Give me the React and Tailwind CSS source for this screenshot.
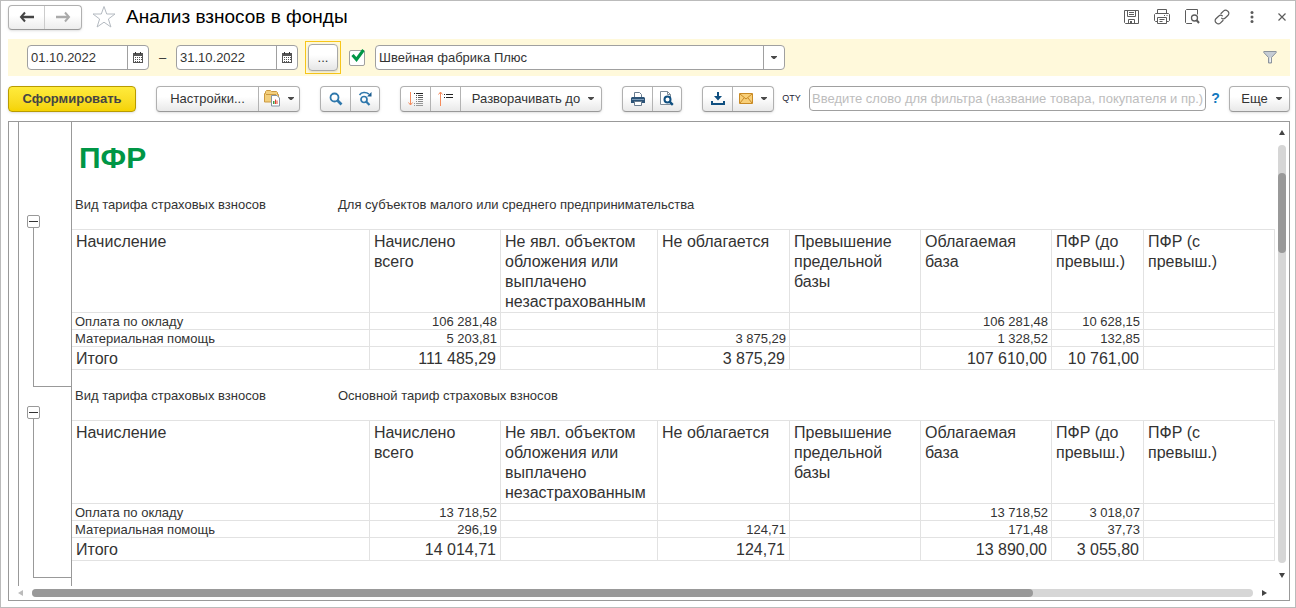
import clsx from "clsx";

const columns = [
  { title: "Начисление", width: "w-[298px]" },
  { title: "Начислено всего", width: "w-[131px]" },
  { title: "Не явл. объектом обложения или выплачено незастрахованным", width: "w-[157px]" },
  { title: "Не облагается", width: "w-[132px]" },
  { title: "Превышение предельной базы", width: "w-[131px]" },
  { title: "Облагаемая база", width: "w-[131px]" },
  { title: "ПФР (до превыш.)", width: "w-[92px]" },
  { title: "ПФР (с превыш.)", width: "w-[131px]" },
];

const groups = [
  {
    tariff: "Для субъектов малого или среднего предпринимательства",
    rows: [
      ["Оплата по окладу", "106 281,48", "", "", "", "106 281,48", "10 628,15", ""],
      ["Материальная помощь", "5 203,81", "", "3 875,29", "", "1 328,52", "132,85", ""],
    ],
    total: ["Итого", "111 485,29", "", "3 875,29", "", "107 610,00", "10 761,00", ""],
  },
  {
    tariff: "Основной тариф страховых взносов",
    rows: [
      ["Оплата по окладу", "13 718,52", "", "", "", "13 718,52", "3 018,07", ""],
      ["Материальная помощь", "296,19", "", "124,71", "", "171,48", "37,73", ""],
    ],
    total: ["Итого", "14 014,71", "", "124,71", "", "13 890,00", "3 055,80", ""],
  },
];

/* ICONS */

function Caret() {
  return (
    <svg width="6" height="3" viewBox="0 0 6 3" fill="#4a4a4a">
      <path d="M0 0h6v.7L3.700 3H2.300L0 .7z" />
    </svg>
  );
}

function ArrowIcon({ flip, color }) {
  return (
    <svg width="15" height="12" viewBox="0 0 15 12" fill="none" stroke={color} strokeWidth="2">
      <path d={flip ? "M0 6h12" : "M15 6H3"} strokeWidth="2.500" />
      <path d={flip ? "M9 1.500L13 6l-4 4.500" : "M6 1.500L2 6l4 4.500"} />
    </svg>
  );
}

function StarIcon() {
  return (
    <svg width="24" height="24" viewBox="0 0 24 24" fill="#fff" stroke="#b4bac1" strokeWidth="1">
      <path d="M12 1.500l2.700 7.500H23l-6.600 5 2.500 8L12 17.200 5.100 22l2.500-8L1 9h8.300z" />
    </svg>
  );
}

function CalendarIcon() {
  return (
    <svg width="10" height="11" viewBox="0 0 10 11" shapeRendering="crispEdges">
      <path d="M0 1h10v10H0z" fill="#555" />
      <path d="M1 4h8v6H1z" fill="#fff" />
      <path d="M2 0h1v2H2zM7 0h1v2H7z" fill="#333" />
      <path d="M2 5h1v1H2zM4 5h1v1H4zM6 5h1v1H6zM8 5h1v1H8zM2 7h1v1H2zM4 7h1v1H4zM6 7h1v1H6zM8 7h1v1H8zM2 9h1v1H2zM4 9h1v1H4zM6 9h1v1H6z" fill="#555" />
    </svg>
  );
}

function SaveIcon() {
  return (
    <svg width="16" height="16" viewBox="0 0 16 16" fill="none" stroke="#5c5c5c">
      <path d="M.5 1.500h14v13h-13l-1-1z" />
      <path d="M3.500 1.500v6h8v-6M5 3.500h5M5 5.500h5M4.500 14.500v-4h6v4" />
      <path d="M6 12h2v2.500H6z" fill="#5c5c5c" stroke="none" />
    </svg>
  );
}

function PrinterOutlineIcon() {
  return (
    <svg width="16" height="16" viewBox="0 0 16 16" fill="none" stroke="#5c5c5c">
      <path d="M3.500 4.500v-4h9v4M3.500 12.500h-2l-1-1v-6l1-1h13l1 1v6l-1 1h-2" />
      <path d="M3.500 8.500h9v6h-9zM5.500 10.500h5M5.500 12.500h3M10 6.500h1M12.500 6.500h1" />
    </svg>
  );
}

function PreviewOutlineIcon() {
  return (
    <svg width="16" height="16" viewBox="0 0 16 16" fill="none" stroke="#5c5c5c">
      <path d="M8 14.500H2.500l-1-1v-12l1-1h11v5" />
      <circle cx="10.500" cy="9" r="3" strokeWidth="1.300" />
      <path d="M12.500 11l2.500 3" strokeWidth="2" />
    </svg>
  );
}

function LinkIcon() {
  return (
    <svg width="16" height="16" viewBox="0 0 16 16" fill="none" stroke="#5c5c5c" strokeWidth="1.200" strokeLinecap="round">
      <path d="M7 4.500l2.700-2.700a2.600 2.600 0 013.700 0l.7.700a2.600 2.600 0 010 3.700L11.200 9a2.600 2.600 0 01-3.500.2" />
      <path d="M9 11.500l-2.700 2.700a2.600 2.600 0 01-3.700 0l-.7-.7a2.600 2.600 0 010-3.700L4.800 7a2.600 2.600 0 013.500-.2" />
    </svg>
  );
}

function DotsIcon() {
  return (
    <svg width="4" height="12" viewBox="0 0 4 12" fill="#5c5c5c">
      <circle cx="2" cy="1.500" r="1.500" />
      <circle cx="2" cy="6" r="1.500" />
      <circle cx="2" cy="10.500" r="1.500" />
    </svg>
  );
}

function CloseIcon() {
  return (
    <svg width="8" height="8" viewBox="0 0 8 8" stroke="#5c5c5c" strokeWidth="1.200">
      <path d="M.5.5l7 7M7.500.5l-7 7" />
    </svg>
  );
}

function FunnelIcon() {
  return (
    <svg width="14" height="13" viewBox="0 0 14 13" fill="#c5ccd4" stroke="#8b939c">
      <path d="M.8.5h12.400v1L8.500 6.500v5.500h-3V6.500L.8 1.500z" />
      <path d="M7.200 6.500V11" stroke="#fff" />
    </svg>
  );
}

function FolderReportIcon() {
  return (
    <svg width="17" height="17" viewBox="0 0 17 17">
      <path d="M.5 12V3.500h1v-2l1-1h4l1 1h5l1 1v2h1V12z" fill="#f3cf7c" stroke="#cb9940" />
      <path d="M2 4.500h10" stroke="#cb9940" />
      <path d="M7.500 5.500h5.500l2.500 2.500v8h-8z" fill="#fff" stroke="#8494a3" />
      <path d="M9 11h1.500v3H9z" fill="#3b9b4a" />
      <path d="M11 9.500h1V14h-1z" fill="#e04030" />
      <path d="M12.500 10.500h1V14h-1z" fill="#e04030" />
    </svg>
  );
}

function SearchIcon() {
  return (
    <svg width="14" height="14" viewBox="0 0 14 14" fill="none" stroke="#2f78ac">
      <circle cx="5.500" cy="5.500" r="4" strokeWidth="1.800" />
      <path d="M8.500 8.500l4 4" strokeWidth="2.600" />
    </svg>
  );
}

function SearchNextIcon() {
  return (
    <svg width="15" height="15" viewBox="0 0 15 15" fill="none" stroke="#2f78ac">
      <circle cx="6" cy="8.500" r="3" strokeWidth="1.700" />
      <path d="M8.300 10.800l3.200 3.200" strokeWidth="2.200" />
      <path d="M1.500 4C3.500 1 8 .8 11 3.200" strokeWidth="1.600" />
      <path d="M13.500 1v4.500H9z" fill="#1b5d90" stroke="none" />
    </svg>
  );
}

function ExpandIcon() {
  return (
    <svg width="16" height="16" viewBox="0 0 16 16" fill="none">
      <path d="M2.500 1v13M.5 11.500l2 2.500 2-2.500" stroke="#f58b5c" />
      <path d="M6 2.500h1M8 2.500h7" stroke="#222" />
      <path d="M8 4.500h1M10 4.500h5M8 6.500h1M10 6.500h5" stroke="#555" />
      <path d="M8 8.500h1M10 8.500h5M8 10.500h1M10 10.500h5" stroke="#888" />
      <path d="M6 12.500h1M8 12.500h7M6 14.500h1M8 14.500h7" stroke="#999" />
    </svg>
  );
}

function CollapseIcon() {
  return (
    <svg width="16" height="16" viewBox="0 0 16 16" fill="none">
      <path d="M2.500 1v14M.5 3.500l2-2.500 2 2.500" stroke="#f58b5c" />
      <path d="M6 3.500h1M8 3.500h7M6 6.500h1M8 6.500h7" stroke="#222" />
    </svg>
  );
}

function PrintIcon() {
  return (
    <svg width="14" height="14" viewBox="0 0 14 14">
      <path d="M3.500 6V.5h5l2 2V6" fill="#fff" stroke="#6a7d90" />
      <path d="M1 5h12l1 1v5H0V6z" fill="#2d5478" />
      <path d="M1 7.500h12" stroke="#7d9cb9" />
      <path d="M3.500 9.500h7v4h-7z" fill="#fff" stroke="#6a7d90" />
    </svg>
  );
}

function PreviewIcon() {
  return (
    <svg width="14" height="15" viewBox="0 0 14 15">
      <path d="M.5.5h7l3 3v10H.5z" fill="#fff" stroke="#7e8c99" />
      <path d="M7.500.5v3h3" fill="none" stroke="#7e8c99" />
      <circle cx="7.500" cy="8.500" r="3" fill="#fff" stroke="#0f4f80" strokeWidth="2" />
      <path d="M9.800 10.800l3 3" stroke="#0f4f80" strokeWidth="2.400" />
    </svg>
  );
}

function DownloadIcon() {
  return (
    <svg width="14" height="13" viewBox="0 0 14 13" fill="#0f4f80">
      <path d="M6 0h2v4h3L7 8.500 3 4h3z" />
      <path d="M0 9h2v2h10V9h2v4H0z" />
    </svg>
  );
}

function MailIcon() {
  return (
    <svg width="14" height="11" viewBox="0 0 14 11" fill="#f8cf78" stroke="#c98a25">
      <path d="M.5.5h13v10H.5z" />
      <path d="M1 1l6 5 6-5M1 10l4-5M13 10L9 5" fill="none" />
    </svg>
  );
}

/* CONTROLS */

function ToolButton({ label, className, children }) {
  return (
    <button type="button" aria-label={label} className={clsx("flex items-center justify-center", className)}>
      {children}
    </button>
  );
}

function ButtonGroup({ children }) {
  return (
    <div className="flex h-[26px] shrink-0 divide-x divide-[#b3b3b3] rounded-sm border border-[#b0b0b0] border-b-[#999] bg-linear-to-b from-white from-40% to-[#e9e9e9] shadow-sm">
      {children}
    </div>
  );
}

function DateField({ label, value }) {
  return (
    <div className="flex h-[25px] w-[122px] shrink-0 rounded-sm border border-[#a0a0a0] bg-white">
      <input type="text" aria-label={label} defaultValue={value} className="w-[99px] pl-[3px] text-[13px] text-[#333] outline-none" />
      <ToolButton label="Календарь" className="flex-1 border-l border-[#a0a0a0]">
        <CalendarIcon />
      </ToolButton>
    </div>
  );
}

function TitleBar() {
  return (
    <header className="mb-1.5 flex h-8 items-center">
      <div className="flex h-[25px] divide-x divide-[#ccc] rounded-sm border border-[#b0b0b0] border-b-[#999] bg-linear-to-b from-white from-40% to-[#ededed] shadow-sm">
        <ToolButton label="Назад" className="w-9">
          <ArrowIcon color="#444" />
        </ToolButton>
        <ToolButton label="Вперед" className="w-9">
          <ArrowIcon flip color="#aaa" />
        </ToolButton>
      </div>
      <button type="button" aria-label="Избранное" className="ml-2.5">
        <StarIcon />
      </button>
      <h1 className="ml-2.5 flex-1 text-[19px] leading-6 text-black">Анализ взносов в фонды</h1>
      <div className="flex items-center">
        <ToolButton label="Сохранить" className="w-[30px]"><SaveIcon /></ToolButton>
        <ToolButton label="Печать" className="w-[30px]"><PrinterOutlineIcon /></ToolButton>
        <ToolButton label="Просмотр" className="w-[30px]"><PreviewOutlineIcon /></ToolButton>
        <ToolButton label="Ссылка" className="w-[30px]"><LinkIcon /></ToolButton>
        <ToolButton label="Меню" className="w-[30px]"><DotsIcon /></ToolButton>
        <ToolButton label="Закрыть" className="ml-[7px] w-4"><CloseIcon /></ToolButton>
      </div>
    </header>
  );
}

function FilterBar() {
  return (
    <div className="flex h-[37px] items-center bg-[#fff9db] pr-[13px] pl-[19px]">
      <DateField label="Начало периода" value="01.10.2022" />
      <span className="w-[27px] text-center text-[13px]">–</span>
      <DateField label="Конец периода" value="31.10.2022" />
      <div className="ml-[7px] border border-[#f7c61a] p-0.5">
        <button
          type="button"
          aria-label="Выбрать период"
          className="block h-[27px] w-[30px] rounded-sm border border-[#a8a8a8] bg-linear-to-b from-white from-40% to-[#e6e6e6] text-[13px] leading-6 shadow-sm"
        >
          ...
        </button>
      </div>
      <label className="relative ml-2 block size-4">
        <input type="checkbox" defaultChecked aria-label="Отбор по организации" className="block size-4 appearance-none rounded-xs border border-[#a0a0a0] bg-white" />
        <svg className="pointer-events-none absolute -top-0.5 left-0.5" width="14" height="14" viewBox="0 0 14 14" fill="none" stroke="#009646" strokeWidth="3">
          <path d="M1.500 7l4 4.500L12.500 2" />
        </svg>
      </label>
      <div className="ml-2.5 flex h-[25px] w-[410px] rounded-sm border border-[#a0a0a0] bg-white">
        <select aria-label="Организация" className="flex-1 appearance-none pl-[3px] text-[13px] text-[#333] outline-none">
          <option>Швейная фабрика Плюс</option>
        </select>
        <span className="flex w-[21px] items-center justify-center border-l border-[#a0a0a0]">
          <Caret />
        </span>
      </div>
      <button type="button" aria-label="Фильтр" className="ml-auto">
        <FunnelIcon />
      </button>
    </div>
  );
}

function Toolbar() {
  return (
    <div className="flex h-[45px] items-center text-[13px]">
      <button
        type="button"
        className="h-[26px] w-32 shrink-0 rounded-sm border border-[#b89b00] bg-linear-to-b from-[#ffeb3b] to-[#f5d300] font-bold text-[#444] shadow-sm"
      >
        Сформировать
      </button>
      <div className="ml-5 flex shrink-0 gap-5">
        <ButtonGroup>
          <button type="button" className="w-[102px]">Настройки...</button>
          <ToolButton label="Варианты отчета" className="w-10 gap-[7px]">
            <FolderReportIcon />
            <Caret />
          </ToolButton>
        </ButtonGroup>
        <ButtonGroup>
          <ToolButton label="Найти" className="w-[30px]"><SearchIcon /></ToolButton>
          <ToolButton label="Найти далее" className="w-7"><SearchNextIcon /></ToolButton>
        </ButtonGroup>
        <ButtonGroup>
          <ToolButton label="Развернуть" className="w-[30px]"><ExpandIcon /></ToolButton>
          <ToolButton label="Свернуть" className="w-[30px]"><CollapseIcon /></ToolButton>
          <button type="button" className="flex w-[140px] items-center justify-center gap-2 pl-1">
            Разворачивать до
            <Caret />
          </button>
        </ButtonGroup>
        <ButtonGroup>
          <ToolButton label="Печать" className="w-[30px]"><PrintIcon /></ToolButton>
          <ToolButton label="Предварительный просмотр" className="w-7"><PreviewIcon /></ToolButton>
        </ButtonGroup>
        <ButtonGroup>
          <ToolButton label="Сохранить как" className="w-[30px]"><DownloadIcon /></ToolButton>
          <ToolButton label="Отправить" className="w-10 gap-2">
            <MailIcon />
            <Caret />
          </ToolButton>
        </ButtonGroup>
      </div>
      <span className="w-[35px] shrink-0 text-center text-[9px] text-[#223]">QTY</span>
      <input
        type="text"
        aria-label="Фильтр отчета"
        placeholder="Введите слово для фильтра (название товара, покупателя и пр.)"
        className="h-[25px] min-w-0 flex-1 rounded-sm border border-[#a0a0a0] pl-0.5 outline-none placeholder:text-[#bdbdbd]"
      />
      <a href="#help" className="w-[23px] shrink-0 pr-1 text-center text-[14px] font-bold text-[#1178be]">?</a>
      <button
        type="button"
        className="flex h-[26px] w-[61px] shrink-0 items-center justify-center gap-2 rounded-sm border border-[#b0b0b0] border-b-[#999] bg-linear-to-b from-white from-40% to-[#e9e9e9] pl-1 shadow-sm"
      >
        Еще
        <Caret />
      </button>
    </div>
  );
}

/* REPORT */

function ReportTable({ group }) {
  return (
    <table className="w-full table-fixed border-separate border-spacing-0 border-t border-[#e2e2e2]">
      <thead>
        <tr className="h-[83px] align-top text-[16px] leading-5">
          {columns.map((col) => (
            <th key={col.title} className={clsx("border-r border-b border-[#e2e2e2] px-1 pt-0.5 text-left font-normal", col.width)}>
              {col.title}
            </th>
          ))}
        </tr>
      </thead>
      <tbody>
        {group.rows.map((row) => (
          <tr key={row[0]} className="h-[17px] text-[13px] leading-[14px]">
            {row.map((cell, i) => (
              <td key={i} className={clsx("border-r border-b border-[#e2e2e2] px-[3px] pt-0.5", i > 0 && "text-right")}>
                {cell}
              </td>
            ))}
          </tr>
        ))}
        <tr className="h-[23px] text-[16px] leading-5">
          {group.total.map((cell, i) => (
            <td key={i} className={clsx("border-r border-b border-[#e2e2e2] px-1 pt-0.5", i > 0 && "text-right")}>
              {cell}
            </td>
          ))}
        </tr>
      </tbody>
    </table>
  );
}

function ReportGroup({ group }) {
  return (
    <section className="flex">
      <div className="flex w-[53px] shrink-0 flex-col border-r border-[#999] pt-[19px]">
        <button type="button" aria-label="Свернуть группу" className="ml-2 flex size-[13px] items-center justify-center rounded-xs border border-[#999] bg-white">
          <span className="h-px w-[9px] bg-[#333]" />
        </button>
        <div className="ml-3.5 flex-1 border-b border-l border-[#999]" />
      </div>
      <div className="min-w-0 flex-1 pb-[17px]">
        <div className="mb-4 flex pl-[3px] text-[13px] leading-[17px]">
          <span className="w-[263px]">Вид тарифа страховых взносов</span>
          <span>{group.tariff}</span>
        </div>
        <ReportTable group={group} />
      </div>
    </section>
  );
}

function VerticalScroll() {
  return (
    <div className="flex w-3.5 shrink-0 flex-col items-center pt-2 pb-2">
      <svg width="6" height="5" viewBox="0 0 6 5" fill="#444"><path d="M3 0l3 5H0z" /></svg>
      <div className="my-2.5 w-2 flex-1 rounded-full bg-[#d6d6d6] pt-7">
        <div className="h-20 rounded-full bg-[#999]" />
      </div>
      <svg width="6" height="5" viewBox="0 0 6 5" fill="#444"><path d="M3 5L0 0h6z" /></svg>
    </div>
  );
}

function HorizontalScroll() {
  return (
    <div className="flex h-3.5 items-center pr-[22px] pl-[9px]">
      <svg width="5" height="6" viewBox="0 0 5 6" fill="#bbb"><path d="M0 3l5-3v6z" /></svg>
      <div className="mx-[9px] h-2 flex-1 rounded-full bg-[#d6d6d6]">
        <div className="h-2 w-[82%] rounded-full bg-[#999]" />
      </div>
      <svg width="5" height="6" viewBox="0 0 5 6" fill="#444"><path d="M5 3L0 0v6z" /></svg>
    </div>
  );
}

function Report() {
  return (
    <main className="flex flex-1 flex-col border border-[#999]">
      <div className="flex flex-1">
        <div className="w-2.5 shrink-0 border-r border-[#999]" />
        <div className="flex min-w-0 flex-1 flex-col">
          <div className="flex">
            <div className="w-[53px] shrink-0 border-r border-[#999]" />
            <h2 className="pt-5 pb-[22px] pl-[7px] text-[30px] leading-8 font-bold text-[#009646]">ПФР</h2>
          </div>
          {groups.map((group) => (
            <ReportGroup key={group.tariff} group={group} />
          ))}
          <div className="w-[53px] flex-1 border-r border-[#999]" />
        </div>
        <VerticalScroll />
      </div>
      <HorizontalScroll />
    </main>
  );
}

export default function App() {
  return (
    <div className="flex min-h-screen flex-col border border-[#bbb] bg-white pr-[5px] pb-1.5 pl-[7px] font-['Liberation_Sans',Arial,sans-serif] text-[#333]">
      <TitleBar />
      <FilterBar />
      <Toolbar />
      <Report />
    </div>
  );
}
